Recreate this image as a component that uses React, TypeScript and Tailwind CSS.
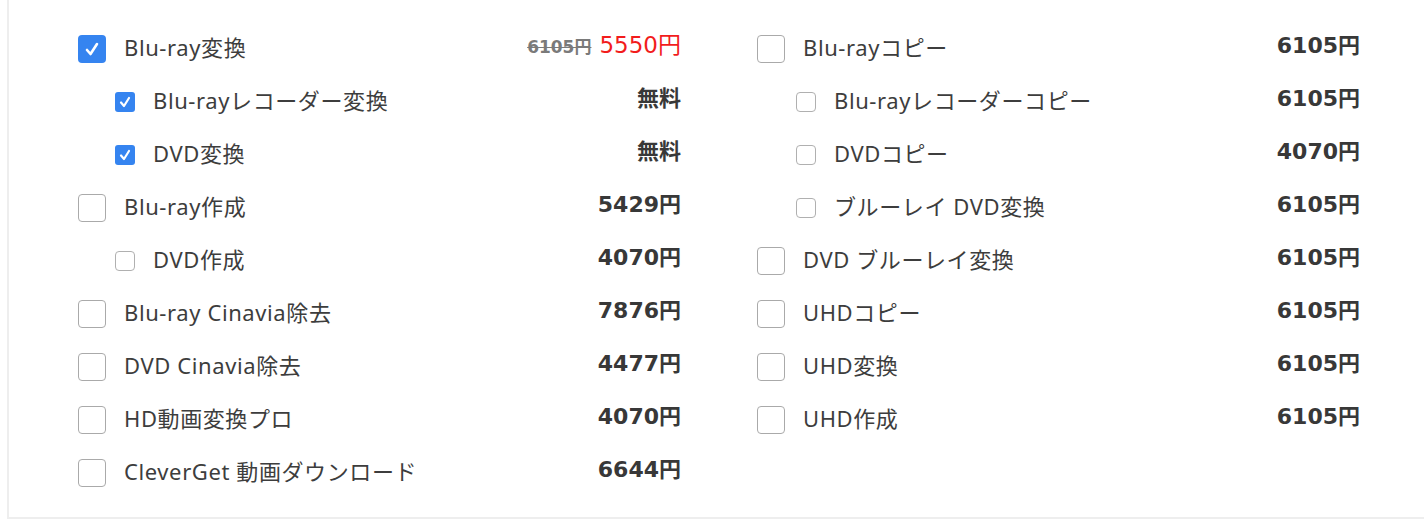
import React from "react";

type Item = {
  label: string;
  price?: string;
  sub?: boolean;
  checked?: boolean;
  sale?: { old: string; now: string };
};

const left: Item[] = [
  { label: "Blu-ray変換", checked: true, sale: { old: "6105円", now: "5550円" } },
  { label: "Blu-rayレコーダー変換", sub: true, checked: true, price: "無料" },
  { label: "DVD変換", sub: true, checked: true, price: "無料" },
  { label: "Blu-ray作成", price: "5429円" },
  { label: "DVD作成", sub: true, price: "4070円" },
  { label: "Blu-ray Cinavia除去", price: "7876円" },
  { label: "DVD Cinavia除去", price: "4477円" },
  { label: "HD動画変換プロ", price: "4070円" },
  { label: "CleverGet 動画ダウンロード", price: "6644円" },
];

const right: Item[] = [
  { label: "Blu-rayコピー", price: "6105円" },
  { label: "Blu-rayレコーダーコピー", sub: true, price: "6105円" },
  { label: "DVDコピー", sub: true, price: "4070円" },
  { label: "ブルーレイ DVD変換", sub: true, price: "6105円" },
  { label: "DVD ブルーレイ変換", price: "6105円" },
  { label: "UHDコピー", price: "6105円" },
  { label: "UHD変換", price: "6105円" },
  { label: "UHD作成", price: "6105円" },
];

const labelFont = { fontFamily: '"Noto Sans", "Noto Sans CJK JP", sans-serif' };
const priceFont = { fontFamily: '"DejaVu Sans", "Noto Sans CJK JP", sans-serif' };

function Box({ sub, checked }: { sub?: boolean; checked?: boolean }) {
  if (sub) {
    return checked ? (
      <span className="flex h-[20px] w-[20px] shrink-0 items-center justify-center rounded-[3px] bg-[#3584f0]">
        <svg width="14" height="14" viewBox="0 0 14 14">
          <polyline points="3,7.5 6,11 11,3" fill="none" stroke="white" strokeWidth="2.2" strokeLinecap="round" strokeLinejoin="round" />
        </svg>
      </span>
    ) : (
      <span className="h-[20px] w-[20px] shrink-0 rounded-[4px] border border-[#b0b0b0] bg-white" />
    );
  }
  return checked ? (
    <span className="flex h-[28px] w-[28px] shrink-0 items-center justify-center rounded-[4px] bg-[#3584f0]">
      <svg width="18" height="18" viewBox="0 0 18 18">
        <polyline points="4,10 7.5,14 14,4" fill="none" stroke="white" strokeWidth="2.6" strokeLinecap="round" strokeLinejoin="round" />
      </svg>
    </span>
  ) : (
    <span className="h-[28px] w-[28px] shrink-0 rounded-[4px] border border-[#aaaaaa] bg-white" />
  );
}

function Row({ item, subIndent }: { item: Item; subIndent: string }) {
  return (
    <div className="flex h-[53px] items-center">
      <div className={`flex items-center gap-[18px] ${item.sub ? subIndent : ""}`}>
        <Box sub={item.sub} checked={item.checked} />
        <span className="-mt-[3px] text-[22px] leading-[30px] tracking-[0.6px] text-[#3d3d3d]" style={labelFont}>
          {item.label}
        </span>
      </div>
      <div className="ml-auto flex items-baseline gap-[8px] -mt-[6px]" style={priceFont}>
        {item.sale ? (
          <>
            <span className="text-[17px] font-bold text-[#7a7a7a] line-through">{item.sale.old}</span>
            <span className="text-[23px] text-[#f21c1c]">{item.sale.now}</span>
          </>
        ) : (
          <span className="text-[22px] font-bold text-[#383838]">{item.price}</span>
        )}
      </div>
    </div>
  );
}

export default function App() {
  return (
    <div className="h-[525px] w-full overflow-hidden bg-white" style={labelFont}>
      <div className="ml-[7px] h-[519px] border-b-2 border-l-2 border-[#eeeeee]">
        <div className="grid grid-cols-[603px_603px] gap-x-[76px] pl-[69px] pt-[22px]">
          <div className="flex flex-col">
            {left.map((it) => (
              <Row key={it.label} item={it} subIndent="pl-[37px]" />
            ))}
          </div>
          <div className="flex flex-col">
            {right.map((it) => (
              <Row key={it.label} item={it} subIndent="pl-[39px]" />
            ))}
          </div>
        </div>
      </div>
    </div>
  );
}
